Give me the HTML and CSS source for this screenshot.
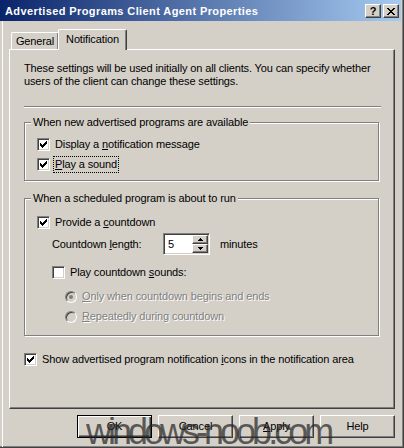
FILE: index.html
```html
<!DOCTYPE html>
<html>
<head>
<meta charset="utf-8">
<title>Advertised Programs Client Agent Properties</title>
<link rel="stylesheet" href="styles.css">
</head>
<body>
<div class="window">
  <div class="titlebar">
    <span class="title">Advertised Programs Client Agent Properties</span>
    <span class="tbtns">
      <span class="tbtn help">?</span>
      <span class="tbtn close"><svg width="8" height="7" viewBox="0 0 8 7"><path d="M0 0h2v1h-2zM6 0h2v1h-2zM1 1h2v1h-2zM5 1h2v1h-2zM2 2h4v1h-4zM3 3h2v1h-2zM2 4h4v1h-4zM1 5h2v1h-2zM5 5h2v1h-2zM0 6h2v1h-2zM6 6h2v1h-2z" fill="#000"/></svg></span>
    </span>
  </div>
  <div class="client">
    <div class="tabrow">
      <div class="tab">General</div>
      <div class="tab active">Notification</div>
    </div>
    <div class="panel">
      <p class="intro">These settings will be used initially on all clients. You can specify whether<br>users of the client can change these settings.</p>
      <div class="sep"></div>

      <div class="group g1">
        <span class="legend">When new advertised programs are available</span>
        <div class="row">
          <span class="cb"><svg width="11" height="11" viewBox="0 0 11 11"><path d="M2 4h1v1h1v1h1v-1h1v-1h1v-1h1v-1h1v3h-1v1h-1v1h-1v1h-1v1h-1v-1h-1v-1h-1z" fill="#000"/></svg></span>
          <span class="lbl">Display a <u>n</u>otification message</span>
        </div>
        <div class="row gap7">
          <span class="cb"><svg width="11" height="11" viewBox="0 0 11 11"><path d="M2 4h1v1h1v1h1v-1h1v-1h1v-1h1v-1h1v3h-1v1h-1v1h-1v1h-1v1h-1v-1h-1v-1h-1z" fill="#000"/></svg></span>
          <span class="lbl focus"><u>P</u>lay a sound</span>
        </div>
      </div>

      <div class="group g2">
        <span class="legend">When a scheduled program is about to run</span>
        <div class="row">
          <span class="cb"><svg width="11" height="11" viewBox="0 0 11 11"><path d="M2 4h1v1h1v1h1v-1h1v-1h1v-1h1v-1h1v3h-1v1h-1v1h-1v1h-1v1h-1v-1h-1v-1h-1z" fill="#000"/></svg></span>
          <span class="lbl">Provide a <u>c</u>ountdown</span>
        </div>
        <div class="spinrow">
          <span class="spinlbl">Countdown <u>l</u>ength:</span>
          <span class="spin">
            <span class="spinval">5</span>
            <span class="arrows">
              <span class="abtn"><svg width="5" height="3" viewBox="0 0 5 3"><path d="M2 0h1v1h1v1h1v1h-5v-1h1v-1h1z" fill="#000"/></svg></span>
              <span class="abtn"><svg width="5" height="3" viewBox="0 0 5 3"><path d="M0 0h5v1h-1v1h-1v1h-1v-1h-1v-1h-1z" fill="#000"/></svg></span>
            </span>
          </span>
          <span class="unit">minutes</span>
        </div>
        <div class="row ind15 gap11">
          <span class="cb"></span>
          <span class="lbl">Play countdown <u>s</u>ounds:</span>
        </div>
        <div class="row ind28 gap11">
          <span class="radio"><span class="dot"></span></span>
          <span class="lbl dis"><u>O</u>nly when countdown begins and ends</span>
        </div>
        <div class="row ind28 gap7">
          <span class="radio"></span>
          <span class="lbl dis"><u>R</u>epeatedly during countdown</span>
        </div>
      </div>

      <div class="row bottomcb">
        <span class="cb"><svg width="11" height="11" viewBox="0 0 11 11"><path d="M2 4h1v1h1v1h1v-1h1v-1h1v-1h1v-1h1v3h-1v1h-1v1h-1v1h-1v1h-1v-1h-1v-1h-1z" fill="#000"/></svg></span>
        <span class="lbl">Show advertised program notification <u>i</u>cons in the notification area</span>
      </div>
    </div>
    <div class="buttons">
      <span class="btn default">OK</span>
      <span class="btn">Cancel</span>
      <span class="btn"><u>A</u>pply</span>
      <span class="btn">Help</span>
    </div>
  </div>
  <div class="watermark">windows-noob.com</div>
</div>
</body>
</html>
```
FILE: styles.css
```css
* { box-sizing: border-box; }
html, body { margin: 0; padding: 0; }
body {
  width: 404px;
  height: 448px;
  overflow: hidden;
  background: #d4d0c8;
  font: 11px/13px "Liberation Sans", Arial, sans-serif;
  letter-spacing: -0.13px;
  color: #000;
}
u { text-decoration: underline; text-underline-offset: 1px; }

.window {
  position: relative;
  width: 404px;
  height: 448px;
  border-right: 1px solid #404040;
  border-bottom: 1px solid #404040;
  box-shadow: inset -1px -1px 0 #808080;
}

.titlebar {
  height: 21px;
  margin-right: 2px;
  display: flex;
  align-items: center;
  justify-content: space-between;
  padding: 0 2px 0 5px;
  background: linear-gradient(to right, #0a246a, #a6caf0);
  color: #fff;
}
.title { font-weight: bold; padding-top: 1px; letter-spacing: 0.4px; }
.tbtns { display: flex; gap: 2px; padding-top: 1px; }
.tbtn {
  width: 16px;
  height: 14px;
  display: flex;
  align-items: center;
  justify-content: center;
  background: #d4d0c8;
  color: #000;
  font-weight: bold;
  font-size: 11px;
  border-top: 1px solid #fff;
  border-left: 1px solid #fff;
  border-right: 1px solid #404040;
  border-bottom: 1px solid #404040;
  box-shadow: inset -1px -1px 0 #808080;
}
.tbtn.help { line-height: 11px; }

.client {
  margin-left: 2px;
  border-left: 1px solid #fff;
  height: 426px;
  padding: 8px 0 0 6px;
}

.tabrow {
  position: relative;
  z-index: 1;
  display: flex;
  align-items: flex-end;
  height: 20px;
  padding-left: 2px;
}
.tab {
  height: 17px;
  width: 48px;
  text-align: center;
  padding-top: 2px;
  background: #d4d0c8;
  border-top: 1px solid #fff;
  border-left: 1px solid #fff;
  border-right: 1px solid #404040;
  border-radius: 2px 2px 0 0;
  box-shadow: inset -1px 0 0 #808080;
}
.tab.active {
  width: 69px;
  height: 21px;
  margin-left: -1px;
  margin-bottom: -1px;
  padding-top: 3px;
}

.panel {
  width: 386px;
  height: 360px;
  border-top: 1px solid #fff;
  border-left: 1px solid #fff;
  border-right: 1px solid #404040;
  border-bottom: 1px solid #404040;
  box-shadow: inset -1px -1px 0 #808080;
  padding: 12px 13px 0 14px;
}

.intro { margin: 0; line-height: 13px; }
.sep {
  margin-top: 18px;
  height: 2px;
  border-top: 1px solid #808080;
  border-bottom: 1px solid #fff;
}

.group {
  position: relative;
  border: 1px solid #808080;
  box-shadow: inset 1px 1px 0 #fff, 1px 1px 0 #fff;
  width: 355px;
}
.legend {
  position: absolute;
  top: -7px;
  left: 6px;
  padding: 0 2px;
  background: #d4d0c8;
  line-height: 13px;
  white-space: nowrap;
}
.g1 { margin-top: 14px; padding: 15px 0 9px 12px; }
.g2 { margin-top: 17px; padding: 17px 0 12px 12px; }

.row {
  display: flex;
  align-items: center;
  height: 13px;
  white-space: nowrap;
}
.gap7 { margin-top: 7px; }
.gap11 { margin-top: 11px; }
.ind15 { padding-left: 15px; }
.ind28 { padding-left: 28px; }
.lbl { margin-left: 5px; line-height: 13px; }
.focus { outline: 1px dotted #000; outline-offset: 1px; margin-left: 5px; }

.cb {
  width: 13px;
  height: 13px;
  flex: none;
  background: #fff;
  border-style: solid;
  border-width: 1px;
  border-color: #808080 #fff #fff #808080;
  box-shadow: inset 1px 1px 0 #404040, inset -1px -1px 0 #d4d0c8;
  display: flex;
}
.cb svg { display: block; }

.radio {
  width: 12px;
  height: 12px;
  flex: none;
  border-radius: 50%;
  border: 1px solid;
  border-color: #808080 #fff #fff #808080;
  box-shadow: inset 1px 1px 0 #404040;
  background: #d4d0c8;
  display: flex;
  align-items: center;
  justify-content: center;
}
.dot {
  width: 4px;
  height: 4px;
  border-radius: 50%;
  background: #808080;
}
.dis { color: #808080; text-shadow: 1px 1px 0 #fff; }

.spinrow {
  display: flex;
  align-items: center;
  margin-top: 4px;
  height: 22px;
  padding-left: 15px;
}
.spinlbl { width: 111px; flex: none; }
.spin {
  width: 47px;
  height: 22px;
  flex: none;
  display: flex;
  background: #fff;
  border-style: solid;
  border-width: 1px;
  border-color: #808080 #fff #fff #808080;
  box-shadow: inset 1px 1px 0 #404040, inset -1px -1px 0 #d4d0c8;
  padding: 1px 1px 1px 4px;
}
.spinval { flex: 1; align-self: center; line-height: 13px; }
.arrows { display: flex; flex-direction: column; width: 16px; }
.abtn {
  height: 9px;
  display: flex;
  align-items: center;
  justify-content: center;
  background: #d4d0c8;
  border-top: 1px solid #fff;
  border-left: 1px solid #fff;
  border-right: 1px solid #404040;
  border-bottom: 1px solid #404040;
  box-shadow: inset -1px -1px 0 #808080;
}
.abtn svg { display: block; }
.unit { margin-left: 10px; }

.bottomcb { margin-top: 17px; }

.buttons {
  display: flex;
  justify-content: flex-end;
  gap: 6px;
  width: 386px;
  margin-top: 6px;
}
.btn {
  width: 75px;
  height: 23px;
  display: flex;
  align-items: center;
  justify-content: center;
  border-top: 1px solid #fff;
  border-left: 1px solid #fff;
  border-right: 1px solid #404040;
  border-bottom: 1px solid #404040;
  box-shadow: inset -1px -1px 0 #808080;
}
.btn.default {
  border: 1px solid #000;
  box-shadow: inset 1px 1px 0 #fff, inset -1px -1px 0 #404040, inset -2px -2px 0 #808080;
}

.watermark {
  position: absolute;
  left: 86px;
  top: 414px;
  font: 36px/36px "Liberation Sans", Arial, sans-serif;
  letter-spacing: -4px;
  color: rgba(40, 40, 40, 0.72);
  white-space: nowrap;
  pointer-events: none;
}
```
